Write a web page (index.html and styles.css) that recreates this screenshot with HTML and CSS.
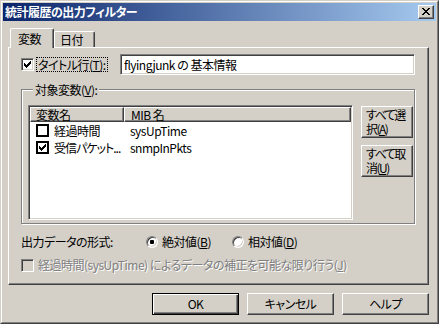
FILE: index.html
```html
<!DOCTYPE html>
<html lang="ja">
<head>
<meta charset="utf-8">
<title>統計履歴の出力フィルター</title>
<link rel="stylesheet" href="styles.css">
</head>
<body>
<div class="window">
  <div class="window-inner">
    <div class="titlebar">
      <span class="title">統計履歴の出力フィルター</span>
      <div class="close">
        <svg width="8" height="7" viewBox="0 0 8 7"><path d="M0 0h2v1H0zM6 0h2v1H6zM1 1h2v1H1zM5 1h2v1H5zM2 2h4v1H2zM3 3h2v1H3zM2 4h4v1H2zM1 5h2v1H1zM5 5h2v1H5zM0 6h2v1H0zM6 6h2v1H6z"/></svg>
      </div>
    </div>
    <div class="content">
      <div class="tabs">
        <div class="tab active">変数</div>
        <div class="tab">日付</div>
      </div>
      <div class="panel">
        <div class="title-row">
          <span class="check">
            <svg width="7" height="7" viewBox="0 0 7 7"><path d="M0 2h1v3H0zM1 3h1v3H1zM2 4h1v3H2zM3 3h1v3H3zM4 2h1v3H4zM5 1h1v3H5zM6 0h1v3H6z"/></svg>
          </span>
          <span class="focus">タイトル行(<u>T</u>):</span>
          <div class="textfield">flyingjunk の 基本情報</div>
        </div>
        <div class="group">
          <span class="group-label">対象変数(<u>V</u>):</span>
          <div class="group-body">
            <div class="listview">
              <div class="lv-header">
                <div class="hcell c1">変数名</div>
                <div class="hcell c2">MIB 名</div>
              </div>
              <div class="lv-row">
                <div class="cell c1"><span class="lvcheck"></span><span class="name">経過時間</span></div>
                <div class="cell c2">sysUpTime</div>
              </div>
              <div class="lv-row">
                <div class="cell c1"><span class="lvcheck"><svg width="7" height="7" viewBox="0 0 7 7"><path d="M0 2h1v3H0zM1 3h1v3H1zM2 4h1v3H2zM3 3h1v3H3zM4 2h1v3H4zM5 1h1v3H5zM6 0h1v3H6z"/></svg></span><span class="name trunc">受信パケット...</span></div>
                <div class="cell c2">snmpInPkts</div>
              </div>
            </div>
            <div class="side-buttons">
              <div class="btn side"><span class="line">すべて選</span><span class="line">択(<u>A</u>)</span></div>
              <div class="btn side"><span class="line">すべて取</span><span class="line">消(<u>U</u>)</span></div>
            </div>
          </div>
        </div>
        <div class="format-row">
          <span class="format-label">出力データの形式:</span>
          <span class="radio-item first"><span class="radio"><span class="dot"></span></span><span>絶対値(<u>B</u>)</span></span>
          <span class="radio-item"><span class="radio"></span><span>相対値(<u>D</u>)</span></span>
        </div>
        <div class="disabled-row">
          <span class="check disabled"></span>
          <span class="disabled-text">経過時間(sysUpTime) によるデータの補正を可能な限り行う(<u>J</u>)</span>
        </div>
      </div>
      <div class="footer">
        <div class="btn default">OK</div>
        <div class="btn">キャンセル</div>
        <div class="btn">ヘルプ</div>
      </div>
    </div>
  </div>
</div>
</body>
</html>
```
FILE: styles.css
```css
* { box-sizing: border-box; }
html, body { margin: 0; padding: 0; background: #D4D0C8; }
body {
  font-family: "Noto Sans CJK JP", "Liberation Sans", sans-serif;
  font-size: 12px;
  line-height: 14px;
  letter-spacing: -0.5px;
  color: #000;
  font-feature-settings: "palt" 1;
}
u { text-decoration: underline; text-underline-offset: 1px; }

.window {
  width: 439px;
  height: 324px;
  border: 1px solid;
  border-color: #D4D0C8 #404040 #404040 #D4D0C8;
}
.window-inner {
  height: 100%;
  border: 1px solid;
  border-color: #fff #808080 #808080 #fff;
  padding: 1px;
  display: flex;
  flex-direction: column;
}
.titlebar {
  height: 18px;
  flex: none;
  background: linear-gradient(to right, #0A246A, #A6CAF0);
  display: flex;
  align-items: center;
  padding: 0 2px 0 2px;
}
.title {
  flex: 1;
  color: #fff;
  font-weight: bold;
  white-space: nowrap;
}
.close {
  width: 16px;
  height: 14px;
  background: #D4D0C8;
  border: 1px solid;
  border-color: #fff #404040 #404040 #fff;
  box-shadow: inset -1px -1px #808080;
  display: flex;
  align-items: flex-start;
  justify-content: flex-start;
  padding: 2px 0 0 3px;
}
.close svg { display: block; }

.content {
  padding: 7px 7px 0 5px;
  display: flex;
  flex-direction: column;
}
.tabs {
  height: 19px;
  display: flex;
  align-items: flex-end;
}
.tab {
  height: 16px;
  width: 41px;
  padding-left: 5px;
  display: flex;
  align-items: center;
  background: #D4D0C8;
  border-top: 1px solid #fff;
  border-left: 1px solid #fff;
  border-right: 1px solid #404040;
  box-shadow: inset -1px 0 #808080;
  border-top-left-radius: 2px;
  border-top-right-radius: 2px;
}
.tab.active {
  height: 20px;
  width: 44px;
  margin-left: 2px;
  padding-left: 7px;
  margin-bottom: -1px;
  position: relative;
  z-index: 1;
}

.panel {
  height: 238px;
  border: 1px solid;
  border-color: #fff #404040 #404040 #fff;
  box-shadow: inset -1px -1px #808080;
  padding: 6px 13px 0 12px;
  display: flex;
  flex-direction: column;
}
.title-row {
  height: 21px;
  display: flex;
  align-items: center;
}
.check {
  width: 13px;
  height: 13px;
  flex: none;
  background: #fff;
  border: 1px solid;
  border-color: #808080 #fff #fff #808080;
  box-shadow: inset 1px 1px #404040, inset -1px -1px #D4D0C8;
  padding: 2px 0 0 2px;
}
.check svg, .lvcheck svg { display: block; }
.check.disabled { background: #D4D0C8; }
.focus {
  margin-left: 2px;
  border: 1px dotted #000;
  padding: 0 1px;
  line-height: 13px;
  white-space: nowrap;
}
.textfield {
  margin-left: auto;
  width: 295px;
  height: 21px;
  background: #fff;
  border: 1px solid;
  border-color: #808080 #fff #fff #808080;
  box-shadow: inset 1px 1px #404040, inset -1px -1px #D4D0C8;
  padding: 0 3px;
  display: flex;
  align-items: center;
  white-space: nowrap;
}

.group {
  margin-top: 14px;
  height: 135px;
  border: 1px solid #808080;
  box-shadow: inset 1px 1px #fff, 1px 1px #fff;
  padding: 0 0 0 6px;
  display: flex;
  flex-direction: column;
}
.group-label {
  align-self: flex-start;
  margin-top: -7px;
  margin-left: 5px;
  margin-bottom: 8px;
  padding: 0 2px;
  background: #D4D0C8;
  white-space: nowrap;
}
.group-body {
  display: flex;
  align-items: flex-start;
}
.listview {
  width: 325px;
  height: 115px;
  background: #fff;
  border: 1px solid;
  border-color: #808080 #fff #fff #808080;
  box-shadow: inset 1px 1px #404040, inset -1px -1px #D4D0C8;
  padding: 1px;
  display: flex;
  flex-direction: column;
}
.lv-header {
  height: 15px;
  display: flex;
  flex: none;
}
.hcell {
  height: 15px;
  background: #D4D0C8;
  border: 1px solid;
  border-color: #fff #404040 #404040 #fff;
  box-shadow: inset -1px -1px #808080;
  display: flex;
  align-items: center;
  white-space: nowrap;
}
.hcell.c1 { width: 94px; padding-left: 5px; }
.hcell.c2 { flex: 1; padding-left: 6px; }
.lv-row {
  height: 17px;
  display: flex;
  align-items: center;
}
.cell { white-space: nowrap; display: flex; align-items: center; }
.cell.c1 { width: 94px; padding-left: 6px; }
.cell.c2 { padding-left: 6px; }
.lvcheck {
  width: 13px;
  height: 13px;
  border: 2px solid #000;
  background: #fff;
  padding: 1px 0 0 1px;
  flex: none;
}
.name { margin-left: 5px; }
.name.trunc { letter-spacing: -1px; }

.side-buttons {
  margin-left: 8px;
  margin-top: 1px;
  display: flex;
  flex-direction: column;
  gap: 7px;
}
.btn {
  background: #D4D0C8;
  border: 1px solid;
  border-color: #fff #404040 #404040 #fff;
  box-shadow: inset -1px -1px #808080;
  display: flex;
  align-items: center;
  justify-content: center;
  white-space: nowrap;
}
.btn.side {
  width: 52px;
  height: 32px;
  flex-direction: column;
  align-items: flex-start;
  justify-content: flex-start;
  padding: 1px 0 0 4px;
  letter-spacing: -1.5px;
}
.line { display: block; height: 14px; line-height: 14px; }

.format-row {
  margin-top: 11px;
  height: 14px;
  display: flex;
  align-items: center;
}
.format-label { width: 125px; white-space: nowrap; }
.radio-item { display: flex; align-items: center; white-space: nowrap; }
.radio-item.first { width: 86px; }
.radio {
  width: 12px;
  height: 12px;
  border-radius: 50%;
  background: #fff;
  border: 1px solid;
  border-color: #808080 #fff #fff #808080;
  box-shadow: inset 1px 1px #404040, inset -1px -1px #D4D0C8;
  display: flex;
  align-items: center;
  justify-content: center;
  margin-right: 4px;
  flex: none;
}
.dot { width: 4px; height: 4px; border-radius: 1px; background: #000; }

.disabled-row {
  margin-top: 9px;
  height: 14px;
  display: flex;
  align-items: center;
}
.disabled-text {
  margin-left: 4px;
  color: #808080;
  text-shadow: 1px 1px #fff;
  white-space: nowrap;
}

.footer {
  margin-top: 8px;
  display: flex;
  justify-content: flex-end;
  gap: 8px;
}
.footer .btn { width: 87px; height: 22px; }
.footer .btn.default {
  border: 1px solid #000;
  box-shadow: inset 1px 1px #fff, inset -1px -1px #404040, inset -2px -2px #808080;
}
```
